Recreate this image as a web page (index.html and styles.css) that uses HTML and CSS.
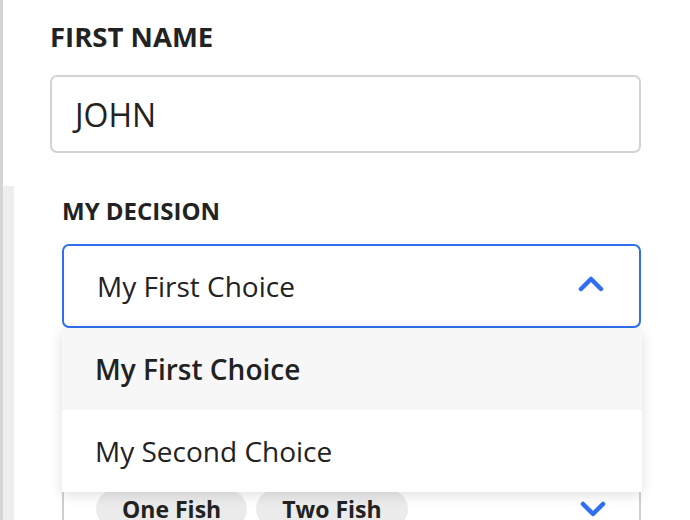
FILE: index.html
```html
<!DOCTYPE html>
<html lang="en">
<head>
<meta charset="utf-8">
<title>Form</title>
<link rel="stylesheet" href="styles.css">
</head>
<body>
<div class="page">
  <div class="field-first">
    <div class="label-lg">FIRST NAME</div>
    <div class="input">JOHN</div>
  </div>
  <div class="section">
    <div class="band"></div>
    <div class="section-body">
      <div class="label-md">MY DECISION</div>
      <div class="select-wrap">
        <div class="select is-open">
          <span class="select-value">My First Choice</span>
          <svg class="chev" width="26" height="16" viewBox="0 0 26 16"><polyline points="3,13 13,3 23,13" fill="none" stroke="#2f6ff0" stroke-width="4.5" stroke-linecap="round" stroke-linejoin="round"/></svg>
        </div>
        <ul class="menu">
          <li class="option is-active">My First Choice</li>
          <li class="option">My Second Choice</li>
        </ul>
      </div>
      <div class="multi">
        <div class="chips">
          <span class="chip">One Fish</span>
          <span class="chip">Two Fish</span>
        </div>
        <svg class="chev" width="26" height="16" viewBox="0 0 26 16"><polyline points="3,3 13,13 23,3" fill="none" stroke="#2f6ff0" stroke-width="4.5" stroke-linecap="round" stroke-linejoin="round"/></svg>
      </div>
    </div>
  </div>
</div>
</body>
</html>
```
FILE: styles.css
```css
html, body {
  margin: 0;
  padding: 0;
  background: #fff;
}
body {
  font-family: "Open Sans", "Noto Sans", sans-serif;
  color: #222;
  overflow: hidden;
}
.page {
  border-left: 3px solid #d4d4d4;
  min-height: 520px;
  box-sizing: border-box;
}
.field-first {
  padding: 20px 49px 0 47px;
}
.label-lg {
  font-size: 27.5px;
  font-weight: 700;
  line-height: 33px;
}
.input {
  margin-top: 22px;
  height: 78px;
  box-sizing: border-box;
  border: 2px solid #d3d3d3;
  border-radius: 7px;
  padding: 0 23px;
  display: flex;
  align-items: center;
  font-size: 32px;
}
.section {
  display: flex;
  margin-top: 33px;
}
.band {
  width: 11px;
  background: #eeeeee;
  flex: none;
  min-height: 340px;
}
.section-body {
  flex: 1;
  padding: 9px 49px 0 48px;
}
.label-md {
  font-size: 24px;
  font-weight: 700;
  line-height: 32px;
}
.select-wrap {
  position: relative;
  margin-top: 17px;
}
.select {
  height: 84px;
  box-sizing: border-box;
  border: 2px solid #2f6ff0;
  border-radius: 7px;
  display: flex;
  align-items: center;
  justify-content: space-between;
  padding: 0 35px 0 33px;
  font-size: 28px;
}
.select .chev {
  margin-top: -4px;
}
.menu {
  position: absolute;
  top: 100%;
  left: 0;
  right: -1px;
  margin: 0;
  padding: 0;
  list-style: none;
  background: #fff;
  box-shadow: 0 3px 12px rgba(0, 0, 0, 0.13);
  z-index: 2;
}
.option {
  height: 82px;
  display: flex;
  align-items: center;
  padding-left: 33px;
  font-size: 28px;
}
.option.is-active {
  background: #f7f7f7;
  font-weight: 600;
}
.multi {
  margin-top: 144px;
  border: 2px solid #cfcfcf;
  border-radius: 7px;
  padding: 16px 33px 16px 32px;
  display: flex;
  align-items: center;
  justify-content: space-between;
}
.chips {
  display: flex;
  gap: 9px;
}
.chip {
  height: 38px;
  display: flex;
  align-items: center;
  padding: 0 26px;
  border-radius: 19px;
  background: #ebebeb;
  font-size: 23px;
  font-weight: 700;
}
```
